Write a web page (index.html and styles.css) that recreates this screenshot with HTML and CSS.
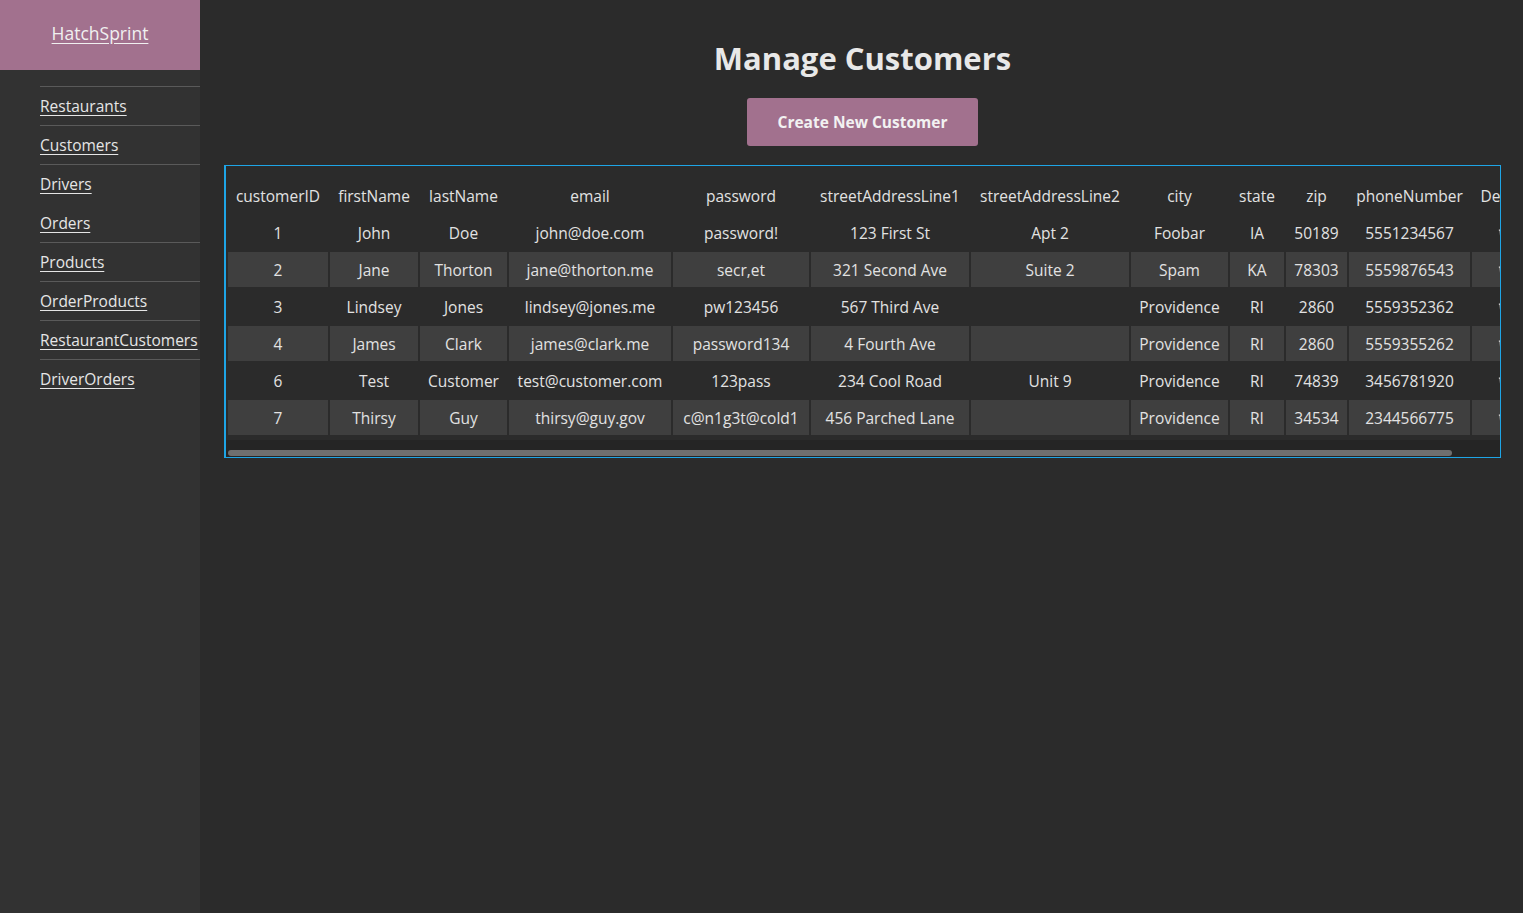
FILE: index.html
```html
<!DOCTYPE html>
<html lang="en">
<head>
<meta charset="utf-8">
<title>Manage Customers</title>
<link rel="stylesheet" href="styles.css">
</head>
<body>
<div class="app">
  <aside class="sidebar">
    <div class="brand"><a href="#">HatchSprint</a></div>
    <ul class="nav">
      <li><a href="#">Restaurants</a></li>
      <li><a href="#">Customers</a></li>
      <li><a href="#">Drivers</a></li>
      <li class="no-line"><a href="#">Orders</a></li>
      <li><a href="#">Products</a></li>
      <li><a href="#">OrderProducts</a></li>
      <li><a href="#">RestaurantCustomers</a></li>
      <li><a href="#">DriverOrders</a></li>
    </ul>
  </aside>
  <main class="main">
    <h1 class="title">Manage Customers</h1>
    <button class="btn" type="button">Create New Customer</button>
    <div class="table-wrap">
      <div class="table-scroll">
        <table class="grid">
          <colgroup>
            <col class="c-id"><col class="c-first"><col class="c-last"><col class="c-email"><col class="c-pass"><col class="c-addr"><col class="c-addr"><col class="c-city"><col class="c-state"><col class="c-zip"><col class="c-phone"><col class="c-del">
          </colgroup>
          <thead>
            <tr><th>customerID</th><th>firstName</th><th>lastName</th><th>email</th><th>password</th><th>streetAddressLine1</th><th>streetAddressLine2</th><th>city</th><th>state</th><th>zip</th><th>phoneNumber</th><th>Delete</th></tr>
          </thead>
          <tbody>
            <tr><td>1</td><td>John</td><td>Doe</td><td>john@doe.com</td><td>password!</td><td>123 First St</td><td>Apt 2</td><td>Foobar</td><td>IA</td><td>50189</td><td>5551234567</td><td><svg class="trash" viewBox="0 0 14 16"><path d="M1 3h12M5 3V1.5h4V3M2.5 3l1 12h7l1-12M5.5 6v6M8.5 6v6" fill="none" stroke="currentColor" stroke-width="1.4"/></svg></td></tr>
            <tr><td>2</td><td>Jane</td><td>Thorton</td><td>jane@thorton.me</td><td>secr,et</td><td>321 Second Ave</td><td>Suite 2</td><td>Spam</td><td>KA</td><td>78303</td><td>5559876543</td><td><svg class="trash" viewBox="0 0 14 16"><path d="M1 3h12M5 3V1.5h4V3M2.5 3l1 12h7l1-12M5.5 6v6M8.5 6v6" fill="none" stroke="currentColor" stroke-width="1.4"/></svg></td></tr>
            <tr><td>3</td><td>Lindsey</td><td>Jones</td><td>lindsey@jones.me</td><td>pw123456</td><td>567 Third Ave</td><td></td><td>Providence</td><td>RI</td><td>2860</td><td>5559352362</td><td><svg class="trash" viewBox="0 0 14 16"><path d="M1 3h12M5 3V1.5h4V3M2.5 3l1 12h7l1-12M5.5 6v6M8.5 6v6" fill="none" stroke="currentColor" stroke-width="1.4"/></svg></td></tr>
            <tr><td>4</td><td>James</td><td>Clark</td><td>james@clark.me</td><td>password134</td><td>4 Fourth Ave</td><td></td><td>Providence</td><td>RI</td><td>2860</td><td>5559355262</td><td><svg class="trash" viewBox="0 0 14 16"><path d="M1 3h12M5 3V1.5h4V3M2.5 3l1 12h7l1-12M5.5 6v6M8.5 6v6" fill="none" stroke="currentColor" stroke-width="1.4"/></svg></td></tr>
            <tr><td>6</td><td>Test</td><td>Customer</td><td>test@customer.com</td><td>123pass</td><td>234 Cool Road</td><td>Unit 9</td><td>Providence</td><td>RI</td><td>74839</td><td>3456781920</td><td><svg class="trash" viewBox="0 0 14 16"><path d="M1 3h12M5 3V1.5h4V3M2.5 3l1 12h7l1-12M5.5 6v6M8.5 6v6" fill="none" stroke="currentColor" stroke-width="1.4"/></svg></td></tr>
            <tr><td>7</td><td>Thirsy</td><td>Guy</td><td>thirsy@guy.gov</td><td>c@n1g3t@cold1</td><td>456 Parched Lane</td><td></td><td>Providence</td><td>RI</td><td>34534</td><td>2344566775</td><td><svg class="trash" viewBox="0 0 14 16"><path d="M1 3h12M5 3V1.5h4V3M2.5 3l1 12h7l1-12M5.5 6v6M8.5 6v6" fill="none" stroke="currentColor" stroke-width="1.4"/></svg></td></tr>
          </tbody>
        </table>
      </div>
      <div class="scrollbar"><div class="thumb"></div></div>
    </div>
  </main>
</div>
</body>
</html>
```

FILE: styles.css
```css
* { box-sizing: border-box; }

html, body {
  margin: 0;
  height: 100%;
}

body {
  background: #2b2b2b;
  color: #e2e2e2;
  font-family: "Open Sans", "Noto Sans", sans-serif;
  font-size: 15.5px;
}

.app {
  display: flex;
  min-height: 100vh;
}

.sidebar {
  width: 200px;
  flex: 0 0 200px;
  background: #323232;
}

.brand {
  height: 70px;
  background: #a2718e;
  display: flex;
  align-items: center;
  justify-content: center;
  padding-bottom: 4px;
}

.brand a {
  color: #f0f0f0;
  font-size: 17.5px;
  text-decoration: underline;
  text-underline-offset: 3px;
}

.nav {
  list-style: none;
  margin: 16px 0 0;
  padding: 0 0 0 40px;
}

.nav li {
  border-top: 1px solid #5a5a5a;
  padding: 9px 0;
  line-height: 20px;
}

.nav li.no-line {
  border-top-color: transparent;
}

.nav a {
  color: #e6e6e6;
  text-decoration: underline;
  text-underline-offset: 3px;
  white-space: nowrap;
}

.main {
  flex: 1;
  min-width: 0;
  display: flex;
  flex-direction: column;
  align-items: center;
  padding: 39px 22px 0 24px;
}

.title {
  margin: 0;
  font-size: 31px;
  line-height: 38px;
  font-weight: 700;
  color: #e8e8e8;
}

.btn {
  margin-top: 21px;
  width: 231px;
  height: 48px;
  border: none;
  border-radius: 3px;
  background: #a2718e;
  color: #f2f2f2;
  font-family: inherit;
  font-size: 15.5px;
  font-weight: 700;
  cursor: pointer;
}

.table-wrap {
  align-self: stretch;
  margin-top: 19px;
  border: 1px solid #1ea5e6;
  border-left-width: 2px;
}

.table-scroll {
  overflow: hidden;
  padding: 10px 0 3px;
}

.scrollbar {
  height: 17px;
  background: #252525;
  padding: 10px 0 1px 2px;
}

.thumb {
  width: 1224px;
  height: 100%;
  background: #6f6f6f;
  border-radius: 3px;
}

.grid {
  table-layout: fixed;
  width: 1312px;
  border-collapse: separate;
  border-spacing: 2px;
}

.grid th,
.grid td {
  height: 35px;
  padding: 0 2px;
  text-align: center;
  vertical-align: middle;
  white-space: nowrap;
  overflow: hidden;
  font-weight: 400;
  color: #e2e2e2;
}

.grid tbody tr:nth-child(even) td {
  background: #3f3f3f;
}

.c-id { width: 100px; }
.c-first { width: 88px; }
.c-last { width: 87px; }
.c-email { width: 162px; }
.c-pass { width: 136px; }
.c-addr { width: 158px; }
.c-city { width: 97px; }
.c-state { width: 54px; }
.c-zip { width: 61px; }
.c-phone { width: 121px; }
.c-del { width: 64px; }

.trash {
  width: 12px;
  height: 15px;
  vertical-align: middle;
  color: #dcdcdc;
}
```
